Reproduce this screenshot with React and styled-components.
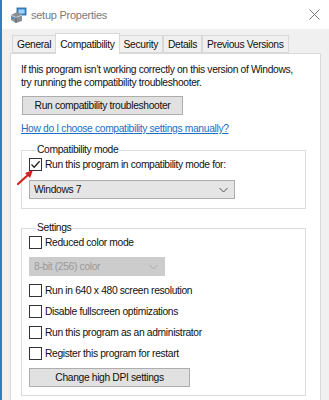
import React from 'react'
import styled, { createGlobalStyle } from 'styled-components'

const GlobalStyle = createGlobalStyle`
  html, body {
    margin: 0;
    padding: 0;
    background: #f0f0f0;
  }
  body {
    font-family: "Liberation Sans", Arial, sans-serif;
    font-size: 10.3px;
    letter-spacing: -0.35px;
    color: #111;
  }
`

const Window = styled.div`
  width: 329px;
  height: 400px;
  box-sizing: border-box;
  border-left: 2px solid #2b7fc4;
  background: #f0f0f0;
  overflow: hidden;
  display: flex;
  flex-direction: column;
`

const TitleBar = styled.div`
  height: 29px;
  flex-shrink: 0;
  background: #fff;
  display: flex;
  align-items: center;
  padding: 0 9px 0 8px;
  gap: 4px;
`

const Title = styled.span`
  flex: 1;
  font-size: 11px;
  letter-spacing: -0.25px;
  color: #7a7a7a;
`

const Close = styled.button`
  border: none;
  background: none;
  padding: 0;
  width: 12px;
  height: 12px;
  display: flex;
  align-items: center;
  justify-content: center;
`

const TabStrip = styled.div`
  display: flex;
  align-items: flex-end;
  padding: 3px 0 0 10px;
  height: 21px;
  position: relative;
  z-index: 1;
`

const Tab = styled.div`
  box-sizing: border-box;
  white-space: nowrap;
  height: ${p => (p.active ? '21px' : '18px')};
  padding: 0 ${p => (p.active ? '4px' : '4px')};
  margin-bottom: ${p => (p.active ? '-1px' : '0')};
  display: flex;
  align-items: center;
  border: 1px solid #d9d9d9;
  border-bottom: ${p => (p.active ? 'none' : '1px solid #d9d9d9')};
  margin-left: ${p => (p.active ? '-1px' : '0')};
  margin-right: ${p => (p.active ? '-1px' : '0')};
  background: ${p => (p.active ? '#fff' : '#f0f0f0')};
  color: #111;
  position: relative;
  z-index: ${p => (p.active ? 2 : 1)};
`

const Panel = styled.div`
  flex: 1;
  margin: 0 8px 0 8px;
  background: #fff;
  border: 1px solid #d9d9d9;
  border-bottom: none;
  padding: 9px 14px 0 10px;
  display: flex;
  flex-direction: column;
`

const Intro = styled.p`
  margin: 0;
  line-height: 13px;
`

const Button = styled.button`
  box-sizing: border-box;
  width: ${p => p.w};
  height: 19px;
  margin: ${p => p.m || '0'};
  border: 1px solid #adadad;
  background: #e1e1e1;
  font-family: inherit;
  font-size: inherit;
  letter-spacing: inherit;
  color: #111;
  padding: 0;
`

const Link = styled.a`
  margin-top: 7px;
  color: #1a6fc4;
  text-decoration: underline;
  line-height: 13px;
`

const Group = styled.fieldset`
  margin: ${p => p.m || '0'};
  padding: 2px 0 ${p => p.pb || '9px'} 7px;
  border: 1px solid #dcdcdc;
  display: flex;
  flex-direction: column;
  gap: ${p => p.gap || '8px'};
  min-width: 0;
`

const Legend = styled.legend`
  padding: 0 1px;
  margin-left: 7px;
  line-height: 12px;
`

const CheckRow = styled.label`
  display: flex;
  align-items: center;
  gap: 3px;
  height: 13px;
  line-height: 13px;
`

const Box = styled.span`
  box-sizing: border-box;
  width: 13px;
  height: 13px;
  border: 1px solid #333;
  background: #fff;
  display: flex;
  align-items: center;
  justify-content: center;
`

const Select = styled.div`
  box-sizing: border-box;
  width: ${p => p.w};
  height: 19px;
  border: 1px solid ${p => (p.disabled ? '#cccccc' : '#adadad')};
  background: ${p => (p.disabled ? '#cccccc' : '#e5e5e5')};
  color: ${p => (p.disabled ? '#9a9a9a' : '#111')};
  display: flex;
  align-items: center;
  justify-content: space-between;
  padding: 0 6px 0 4px;
`

const ArrowMark = styled.svg`
  position: absolute;
  left: 14px;
  top: 168px;
`

const Stage = styled.div`
  position: relative;
`

function Check({ checked, children }) {
  return (
    <CheckRow>
      <Box>
        {checked && (
          <svg width="11" height="11" viewBox="0 0 11 11">
            <path d="M1.5 5.5 L4.2 8.3 L9.6 2.2" fill="none" stroke="#222" strokeWidth="1.3" />
          </svg>
        )}
      </Box>
      {children}
    </CheckRow>
  )
}

function Chevron({ color }) {
  return (
    <svg width="9" height="6" viewBox="0 0 9 6">
      <path d="M0.5 1 L4.5 5 L8.5 1" fill="none" stroke={color} strokeWidth="1" />
    </svg>
  )
}

function AppIcon() {
  return (
    <svg width="17" height="16" viewBox="0 0 17 16">
      <rect x="7" y="1" width="9" height="7" fill="#3a8fd6" stroke="#2a5d8c" strokeWidth="0.8" />
      <rect x="8.5" y="2.5" width="6" height="4" fill="#9fd0f5" />
      <path d="M1 8 L7 5 L12 8 L12 14 L6 16 L1 13 Z" fill="#8a8f96" />
      <path d="M1 8 L6 10.5 L12 8" fill="none" stroke="#cfd3d8" strokeWidth="1" />
      <path d="M6 10.5 L6 16" stroke="#5b6066" strokeWidth="1" />
      <rect x="2" y="10" width="2" height="2" fill="#3a8fd6" />
    </svg>
  )
}

export default function App() {
  return (
    <>
      <GlobalStyle />
      <Window>
        <Stage>
          <TitleBar>
            <AppIcon />
            <Title>setup Properties</Title>
            <Close aria-label="Close">
              <svg width="11" height="11" viewBox="0 0 11 11">
                <path d="M0.5 0.5 L10.5 10.5 M10.5 0.5 L0.5 10.5" stroke="#777" strokeWidth="1" />
              </svg>
            </Close>
          </TitleBar>
          <ArrowMark width="20" height="18" viewBox="0 0 20 18">
            <path d="M2 16 L13 6" stroke="#d42020" strokeWidth="2.2" strokeLinecap="round" />
            <path d="M17 2 L9 5 L14 10 Z" fill="#d42020" />
          </ArrowMark>
        </Stage>
        <TabStrip>
          <Tab>General</Tab>
          <Tab active>Compatibility</Tab>
          <Tab>Security</Tab>
          <Tab>Details</Tab>
          <Tab>Previous Versions</Tab>
        </TabStrip>
        <Panel>
          <Intro>
            If this program isn’t working correctly on this version of Windows,
            <br />
            try running the compatibility troubleshooter.
          </Intro>
          <Button w="161px" m="7px 0 0 1px">Run compatibility troubleshooter</Button>
          <Link href="#">How do I choose compatibility settings manually?</Link>
          <Group m="9px 0 0 0" gap="9px" pb="9px">
            <Legend>Compatibility mode</Legend>
            <Check checked>Run this program in compatibility mode for:</Check>
            <Select w="206px">
              Windows 7
              <Chevron color="#555" />
            </Select>
          </Group>
          <Group m="13px 0 0 0" gap="8px" pb="8px">
            <Legend>Settings</Legend>
            <Check>Reduced color mode</Check>
            <Select w="136px" disabled>
              8-bit (256) color
              <Chevron color="#aaa" />
            </Select>
            <Check>Run in 640 x 480 screen resolution</Check>
            <Check>Disable fullscreen optimizations</Check>
            <Check>Run this program as an administrator</Check>
            <Check>Register this program for restart</Check>
            <Button w="161px">Change high DPI settings</Button>
          </Group>
        </Panel>
      </Window>
    </>
  )
}
